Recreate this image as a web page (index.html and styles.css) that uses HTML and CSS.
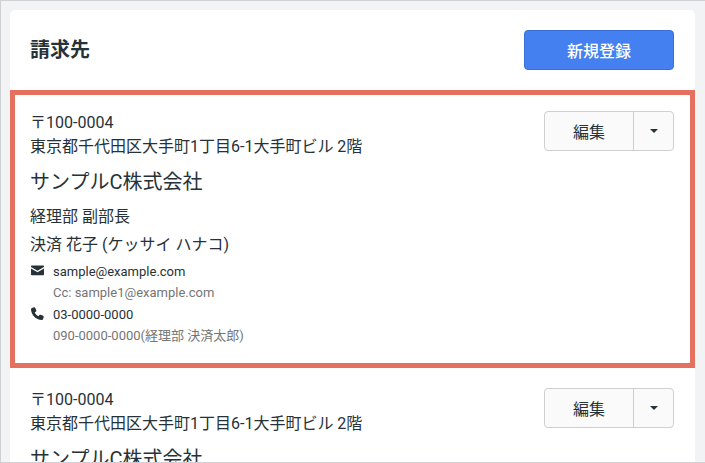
FILE: index.html
```html
<!DOCTYPE html>
<html lang="ja">
<head>
    <meta charset="UTF-8">
    <title>請求先</title>
    <link rel="stylesheet" href="styles.css">
</head>
<body>
    <div class="card">
        <div class="cardHeader">
            <h1 class="title">請求先</h1>
            <a href="#" class="btnPrimary">新規登録</a>
        </div>
        <div class="item highlight">
            <div class="info">
                <p class="address">〒100-0004<br>東京都千代田区大手町1丁目6-1大手町ビル 2階</p>
                <p class="company">サンプルC株式会社</p>
                <p class="dept">経理部 副部長</p>
                <p class="person">決済 花子 (ケッサイ ハナコ)</p>
                <div class="contact">
                    <svg class="icon" viewBox="0 0 14 14"><path d="M0 2.800C0 2.100.5 1.700 1.200 1.700h11.600c.7 0 1.200.4 1.200 1.100v.5L7 7.200 0 3.300z"/><path d="M0 4.900l7 3.900 7-3.900v6.100c0 .7-.5 1.200-1.200 1.200H1.200C.5 12.200 0 11.700 0 11z"/></svg>
                    <div>
                        <p class="main">sample@example.com</p>
                        <p class="sub">Cc: sample1@example.com</p>
                    </div>
                </div>
                <div class="contact">
                    <svg class="icon" viewBox="0 0 14 14"><path d="M3.300.3L1 1C.4 1.200 0 1.800 0 2.400 .3 8.700 5.300 13.700 11.600 14c.6 0 1.200-.4 1.400-1l.7-2.300c.2-.5-.1-1-.6-1.200L10.300 8.300c-.4-.2-.9 0-1.200.3L8 10C6.200 9 5 7.800 4 6l1.400-1.100c.3-.3.5-.8.3-1.200L4.500.9C4.300.4 3.800.1 3.300.3z"/></svg>
                    <div>
                        <p class="main">03-0000-0000</p>
                        <p class="sub">090-0000-0000(経理部 決済太郎)</p>
                    </div>
                </div>
            </div>
            <div class="btnGroup">
                <a href="#" class="btnEdit">編集</a>
                <a href="#" class="btnCaret"><span class="caret"></span></a>
            </div>
        </div>
        <div class="item">
            <div class="info">
                <p class="address">〒100-0004<br>東京都千代田区大手町1丁目6-1大手町ビル 2階</p>
                <p class="company">サンプルC株式会社</p>
            </div>
            <div class="btnGroup">
                <a href="#" class="btnEdit">編集</a>
                <a href="#" class="btnCaret"><span class="caret"></span></a>
            </div>
        </div>
    </div>
</body>
</html>
```

FILE: styles.css
```css
*{
    margin: 0;
    padding: 0;
    box-sizing: border-box;
}
html, body{
    height: 463px;
    overflow: hidden;
}
body{
    padding: 9px 9px 0 9px;
    background-color: #f2f3f5;
    border: 1px solid #cfd1d4;
    border-right: 0;
    font-family: Roboto, "Noto Sans CJK JP", sans-serif;
    font-size: 16px;
    color: #263238;
}
a{
    text-decoration: none;
    color: inherit;
}
.card{
    width: 685px;
    height: 460px;
    background-color: #fff;
    border-radius: 5px 5px 0 0;
    overflow: hidden;
}
.cardHeader{
    height: 80px;
    padding: 20px 21px 0 20px;
    display: flex;
    justify-content: space-between;
    align-items: flex-start;
}
.title{
    font-size: 20px;
    line-height: 40px;
    font-weight: 700;
}
.btnPrimary{
    width: 150px;
    height: 40px;
    background-color: #4480ef;
    border: 1px solid #3a6fd8;
    border-radius: 4px;
    color: #fff;
    font-size: 16px;
    font-weight: 500;
    display: flex;
    align-items: center;
    justify-content: center;
}
.item{
    padding: 20px 21px 0 20px;
    display: flex;
    justify-content: space-between;
    align-items: flex-start;
}
.item.highlight{
    height: 278px;
    padding: 16px 16px 0 15px;
    border: 5px solid #e57060;
}
.address{
    line-height: 24px;
}
.company{
    margin-top: 8px;
    font-size: 20px;
    line-height: 30px;
}
.dept{
    margin-top: 6px;
    line-height: 28px;
}
.person{
    line-height: 28px;
}
.contact{
    display: flex;
    font-size: 13px;
    line-height: 21px;
    margin-top: 1px;
}
.person + .contact{
    margin-top: 2px;
}
.icon{
    width: 13px;
    height: 13px;
    margin: 3px 9px 0 1px;
    fill: #263238;
    flex-shrink: 0;
}
.sub{
    color: #757575;
}
.btnGroup{
    width: 130px;
    height: 40px;
    display: flex;
    background-color: #fafafa;
    border: 1px solid #cfcfcf;
    border-radius: 4px;
    font-size: 16px;
}
.btnEdit{
    flex: 1;
    display: flex;
    align-items: center;
    justify-content: center;
}
.btnCaret{
    width: 40px;
    border-left: 1px solid #cfcfcf;
    display: flex;
    align-items: center;
    justify-content: center;
}
.caret{
    width: 0;
    height: 0;
    border-left: 4px solid transparent;
    border-right: 4px solid transparent;
    border-top: 4px solid #263238;
}
```
